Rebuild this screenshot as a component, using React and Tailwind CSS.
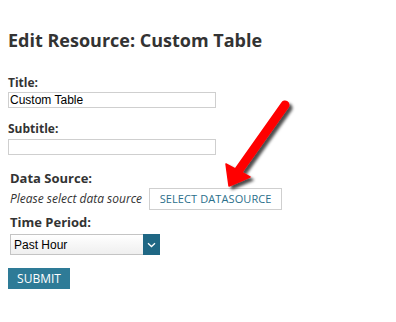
import React from "react";

const label = "font-['Open_Sans',sans-serif] font-bold text-[#333]";

function Arrow() {
  return (
    <svg className="absolute left-0 top-0 pointer-events-none" width="396" height="322" viewBox="0 0 396 322">
      <defs>
        <filter id="sh" x="-50%" y="-50%" width="200%" height="200%">
          <feDropShadow dx="3" dy="3" stdDeviation="1.6" floodColor="#000" floodOpacity="0.7" />
        </filter>
      </defs>
      <g filter="url(#sh)">
        <line x1="285" y1="105" x2="239" y2="170" stroke="#ff0000" strokeWidth="9" strokeLinecap="round" />
        <polygon points="226,164 250,177 229,186" fill="#ff0000" stroke="#ff0000" strokeWidth="1.5" strokeLinejoin="round" />
      </g>
    </svg>
  );
}

export default function App() {
  return (
    <div className="relative w-[396px] h-[322px] bg-white overflow-hidden">
      <div className="flex flex-col pl-[8px] pt-[28px]">
        <h1 className="font-['Open_Sans',sans-serif] font-bold text-[18px] leading-[24px] text-[#333]">
          Edit Resource: Custom Table
        </h1>

        <div className={`${label} text-[12px] leading-[16px] mt-[23px]`}>Title:</div>
        <input
          className="mt-[1px] w-[208px] h-[16px] border border-[#cfcfcf] px-[1px] font-['Liberation_Sans',sans-serif] text-[12px] text-black outline-none"
          defaultValue="Custom Table"
        />

        <div className={`${label} text-[12px] leading-[16px] mt-[13px]`}>Subtitle:</div>
        <input className="mt-[2px] w-[208px] h-[16px] border border-[#cfcfcf] outline-none" />

        <div className="flex flex-col pl-[2px]">
          <div className={`${label} text-[13px] leading-[18px] mt-[14px]`}>Data Source:</div>
          <div className="flex items-center gap-[7px] mt-[1px]">
            <span className="font-['Open_Sans',sans-serif] italic text-[12px] text-[#333]">Please select data source</span>
            <button className="h-[22px] w-[133px] border border-[#cfcfcf] bg-white font-['Open_Sans',sans-serif] text-[11px] text-[#2b6f8b] tracking-[0.1px]">
              SELECT DATASOURCE
            </button>
          </div>

          <div className={`${label} text-[13px] leading-[18px] mt-[3px]`}>Time Period:</div>
          <div className="mt-[3px] flex w-[150px] h-[21px] border border-[#c4c4c4] bg-gradient-to-b from-white to-[#efefef]">
            <span className="flex-1 pl-[3px] flex items-center font-['Liberation_Sans',sans-serif] text-[12px] text-black">Past Hour</span>
            <span className="w-[17px] -my-[1px] -mr-[1px] bg-[#1f6784] flex items-center justify-center">
              <svg width="9" height="6" viewBox="0 0 9 6">
                <path d="M1 1.2 L4.5 4.5 L8 1.2" fill="none" stroke="#fff" strokeWidth="1.3" />
              </svg>
            </span>
          </div>
        </div>

        <button className="mt-[13px] w-[62px] h-[21px] bg-[#2e7b97] text-white font-['Open_Sans',sans-serif] text-[12px] leading-[21px]">
          SUBMIT
        </button>
      </div>
      <Arrow />
    </div>
  );
}
